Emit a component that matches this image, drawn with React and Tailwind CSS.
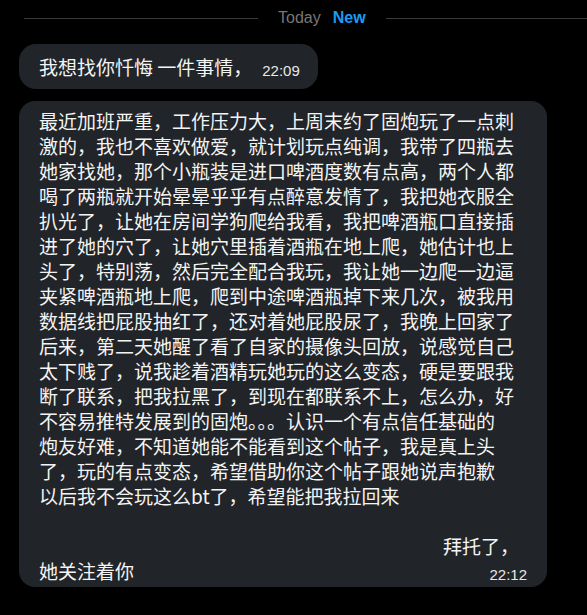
const lines = [
  "最近加班严重，工作压力大，上周末约了固炮玩了一点刺",
  "激的，我也不喜欢做爱，就计划玩点纯调，我带了四瓶去",
  "她家找她，那个小瓶装是进口啤酒度数有点高，两个人都",
  "喝了两瓶就开始晕晕乎乎有点醉意发情了，我把她衣服全",
  "扒光了，让她在房间学狗爬给我看，我把啤酒瓶口直接插",
  "进了她的穴了，让她穴里插着酒瓶在地上爬，她估计也上",
  "头了，特别荡，然后完全配合我玩，我让她一边爬一边逼",
  "夹紧啤酒瓶地上爬，爬到中途啤酒瓶掉下来几次，被我用",
  "数据线把屁股抽红了，还对着她屁股尿了，我晚上回家了",
  "后来，第二天她醒了看了自家的摄像头回放，说感觉自己",
  "太下贱了，说我趁着酒精玩她玩的这么变态，硬是要跟我",
  "断了联系，把我拉黑了，到现在都联系不上，怎么办，好",
  "不容易推特发展到的固炮。。。认识一个有点信任基础的",
  "炮友好难，不知道她能不能看到这个帖子，我是真上头",
  "了，玩的有点变态，希望借助你这个帖子跟她说声抱歉",
  "以后我不会玩这么bt了，希望能把我拉回来",
];

export default function App() {
  return (
    <div className="min-h-[615px] w-full bg-black font-['Noto_Sans_CJK_SC',sans-serif] text-[#f4f4f4]">
      <div className="flex h-[36px] items-center pl-[24px]">
        <div className="h-px w-[234px] bg-[#3a3a3a]" />
        <div className="mx-[20px] flex gap-[12px] font-['Liberation_Sans',sans-serif] text-[16px] leading-[20px]">
          <span className="text-[#767676]">Today</span>
          <span className="font-bold text-[#1d9bf0]">New</span>
        </div>
        <div className="h-px flex-1 bg-[#3a3a3a]" />
      </div>

      <div className="mt-[8px] pl-[19px]">
        <div className="flex h-[45px] w-fit items-center rounded-[17px] bg-[#212428] pl-[20px] pr-[18px] whitespace-nowrap">
          <span className="text-[19px] leading-[25px]">我想找你忏悔 一件事情，</span>
          <span className="ml-[10px] mt-[9px] font-['Liberation_Sans',sans-serif] text-[15px] leading-[18px] text-[#e8e8e8]">
            22:09
          </span>
        </div>
      </div>

      <div className="mt-[12px] pl-[19px]">
        <div className="w-[528px] rounded-[16px] bg-[#212428] px-[20px] pb-[4px] pt-[7px] text-[19px] leading-[25px]">
          {lines.map((l, i) => (
            <div key={i} className="whitespace-nowrap">
              {l}
            </div>
          ))}
          <div className="h-[25px]" />
          <div className="whitespace-nowrap pl-[404px]">拜托了，</div>
          <div className="flex items-end justify-between">
            <span className="whitespace-nowrap">她关注着你</span>
            <span className="mb-[-1px] font-['Liberation_Sans',sans-serif] text-[15px] leading-[18px] text-[#e8e8e8]">
              22:12
            </span>
          </div>
        </div>
      </div>
    </div>
  );
}
